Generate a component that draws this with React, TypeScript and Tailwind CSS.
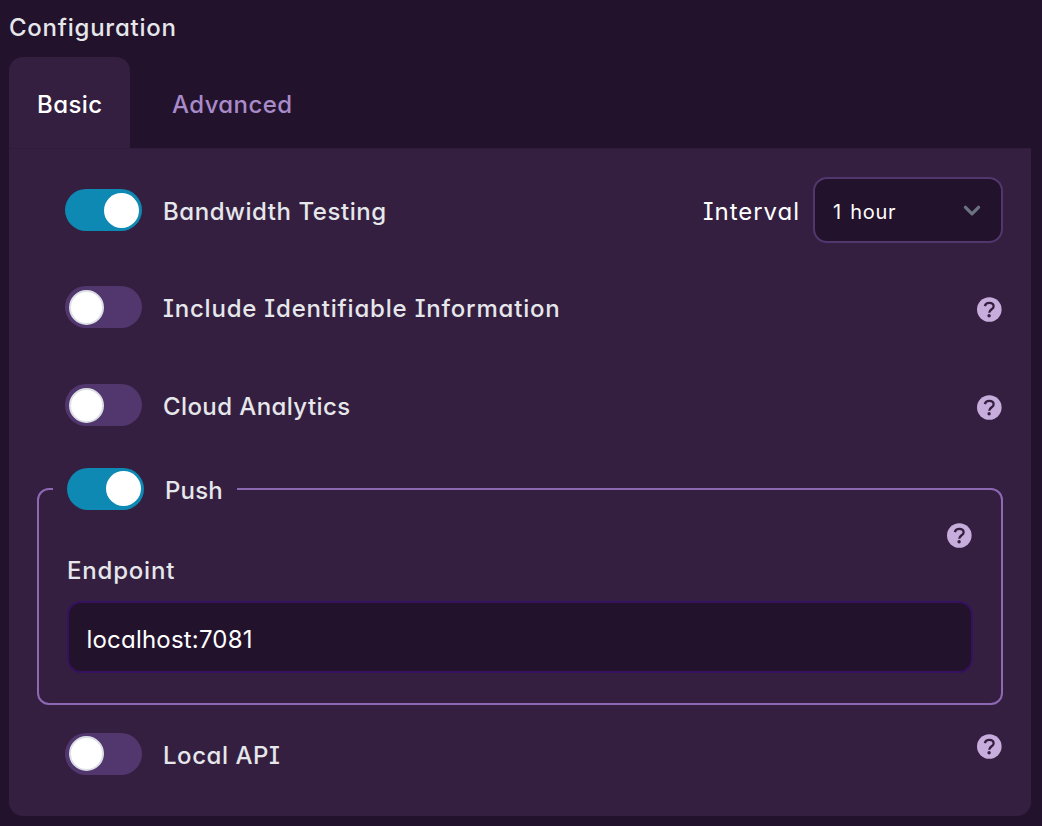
import type { ReactNode } from "react";

function Toggle({ on = false }: { on?: boolean }) {
  return (
    <span
      role="switch"
      aria-checked={on}
      className={
        on
          ? "flex h-[42px] w-[77px] shrink-0 items-center justify-end rounded-full bg-[#0e89b3] pr-[3px]"
          : "flex h-[42px] w-[77px] shrink-0 items-center rounded-full bg-[#51376d] pl-1"
      }
    >
      <span
        className={
          on
            ? "size-[35px] rounded-full bg-white"
            : "size-[35px] rounded-full border-2 border-[#dcdfe5] bg-white"
        }
      />
    </span>
  );
}

function Help() {
  return (
    <svg viewBox="0 0 25 25" className="size-[25px] shrink-0" fill="none">
      <circle cx="12.3" cy="12.5" r="12.3" fill="#c6addb" />
      <path
        d="M7.8 9.1C8.4 7 10 5.9 12.2 5.9C14.8 5.9 16.6 7.3 16.6 9.4C16.6 12.2 12.4 12.4 12.2 15.8"
        stroke="#351f40"
        strokeWidth="2.3"
      />
      <circle cx="12.1" cy="18.8" r="1.7" fill="#351f40" />
    </svg>
  );
}

function Label({ children, className }: { children: ReactNode; className: string }) {
  return <span className={`whitespace-nowrap text-2xl leading-[30px] text-[#e5e7eb] ${className}`}>{children}</span>;
}

export default function App() {
  return (
    <main className="flex h-[826px] w-[1042px] flex-col overflow-hidden bg-[#23122c] pr-[11px] pl-[9px] font-['Inter','Liberation_Sans',sans-serif] font-medium [font-feature-settings:'cv11','cv08']">
      <h1 className="mt-[13px] h-[44px] text-2xl leading-[30px] font-medium tracking-[0.75px] text-[#e5e7eb]">Configuration</h1>
      <nav className="flex h-[91px] text-2xl leading-[30px] tracking-[0.4px]">
        <div className="flex w-[121px] items-center rounded-t-[14px] bg-[#351f40] pt-[5px] pl-7 text-white">Basic</div>
        <div className="flex items-center pt-[5px] pl-[42px] text-[#a98bc9]">Advanced</div>
      </nav>
      <section className="flex h-[668px] flex-col rounded-b-[14px] border-t border-[#321c3c] bg-[#351f40] px-7 pt-7">
        <div className="flex h-[66px] items-center pl-7">
          <Toggle on />
          <Label className="ml-[21px] pt-[4px] tracking-[0.55px]">Bandwidth Testing</Label>
          <span className="ml-auto pt-[4px] text-2xl leading-[30px] font-normal tracking-[0.95px] text-white">Interval</span>
          <div className="ml-[13px] flex h-[66px] w-[190px] items-center justify-between rounded-[14px] border-2 border-[#51376d] bg-[#23122c] pr-5 pl-[18px] text-xl font-normal text-white">
            <span className="pt-[4px] tracking-[0.7px] [word-spacing:2px]">1 hour</span>
            <svg viewBox="0 0 18 11" className="h-[11px] w-[18px]" fill="none" stroke="#6b7280" strokeWidth="3.2" strokeLinecap="round" strokeLinejoin="round">
              <path d="M2.5 2.3L9 8.8L15.5 2.3" />
            </svg>
          </div>
        </div>
        <div className="mt-[43px] flex h-[42px] items-center pl-7">
          <Toggle />
          <Label className="ml-[21px] pt-[3px] tracking-[0.8px]">Include Identifiable Information</Label>
          <div className="mt-[5px] mr-[1px] ml-auto"><Help /></div>
        </div>
        <div className="mt-14 flex h-[42px] items-center pl-7">
          <Toggle />
          <Label className="ml-[21px] pt-[3px] tracking-[0.4px]">Cloud Analytics</Label>
          <div className="mt-[5px] mr-[1px] ml-auto"><Help /></div>
        </div>
        <fieldset className="mt-[41px] h-[238px] rounded-[12px] border-2 border-[#8d68b3] px-[14px]">
          <legend className="px-[14px]">
            <div className="flex h-[43px] items-center">
              <Toggle on />
              <Label className="ml-[21px] pt-[4px] tracking-[0.15px]">Push</Label>
            </div>
          </legend>
          <div className="flex flex-col px-[14px] pt-[13px]">
            <div className="mr-[1px] self-end"><Help /></div>
            <Label className="mt-[8px] tracking-[0.8px]">Endpoint</Label>
            <div className="mt-[15px] flex h-[72px] items-center rounded-[14px] border-2 border-[#35115f] bg-[#23122c] pt-[5px] pl-[17.5px] text-2xl font-normal tracking-[0.2px] text-white">localhost:7081</div>
          </div>
        </fieldset>
        <div className="mt-[27px] flex h-[43px] items-center pl-7">
          <Toggle />
          <Label className="ml-[21px] pt-[5px] tracking-[0.55px]">Local API</Label>
          <div className="mr-[1px] mb-[14px] ml-auto"><Help /></div>
        </div>
      </section>
    </main>
  );
}
